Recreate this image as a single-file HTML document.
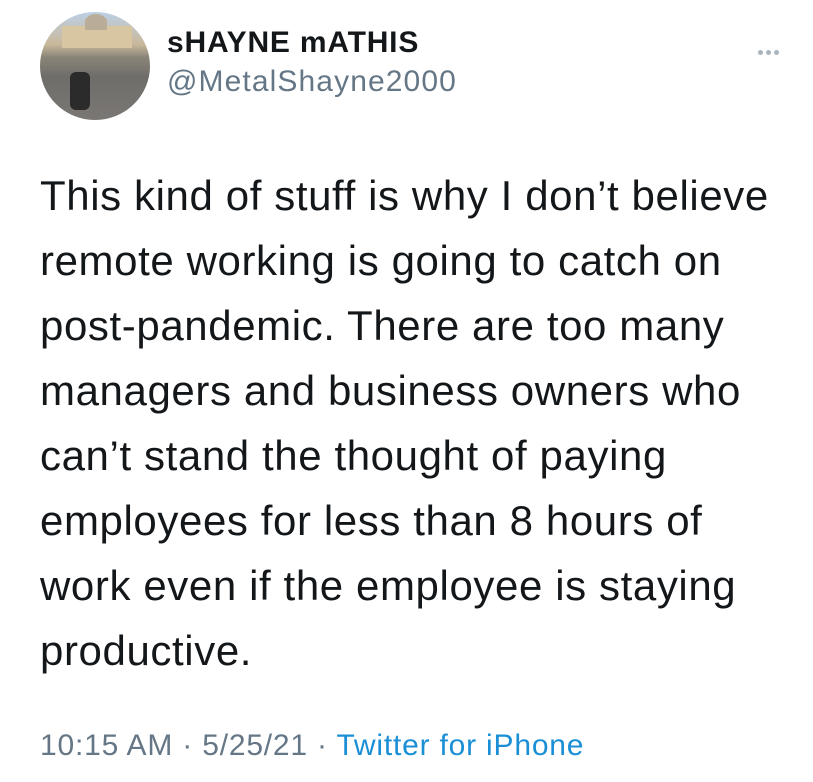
<!DOCTYPE html>
<html><head><style>
body{margin:0;width:813px;height:782px;background:#fff;font-family:"Liberation Sans",Arial,sans-serif;position:relative;overflow:hidden}
.av{position:absolute;left:40px;top:12px;width:110px;height:108px;border-radius:50%;overflow:hidden;background:linear-gradient(#bcd0e6 0%,#c9b89a 30%,#8a8478 42%,#6f6d6a 60%,#7a7774 100%)}
.name{position:absolute;left:167px;top:26px;font-size:30px;letter-spacing:0.8px;font-weight:bold;color:#14171a}
.handle{position:absolute;left:167px;top:65px;font-size:30px;letter-spacing:1.1px;color:#657786}
.dots{position:absolute;left:758px;top:42px}
.dots i{display:inline-block;width:5px;height:5px;border-radius:50%;background:#aab4bd;margin-right:3px}
.txt{position:absolute;left:40px;top:163px;font-size:42px;line-height:65px;color:#14171a;letter-spacing:0.6px}
.ft{position:absolute;left:40px;top:729px;font-size:30px;letter-spacing:0.8px;color:#657786}
.ft span{color:#1b8fd6}
</style></head><body>
<div class="av">
<div style="position:absolute;left:22px;top:14px;width:70px;height:22px;background:#d8c6a3"></div>
<div style="position:absolute;left:45px;top:2px;width:22px;height:16px;border-radius:50% 50% 0 0;background:#b9ad98"></div>
<div style="position:absolute;left:30px;top:60px;width:20px;height:38px;background:#2b2b2b;border-radius:6px"></div>
</div>
<div class="name">sHAYNE mATHIS</div>
<div class="handle">@MetalShayne2000</div>
<div class="dots"><i></i><i></i><i></i></div>
<div class="txt">This kind of stuff is why I don’t believe<br>remote working is going to catch on<br>post-pandemic. There are too many<br>managers and business owners who<br>can’t stand the thought of paying<br>employees for less than 8 hours of<br>work even if the employee is staying<br>productive.</div>
<div class="ft">10:15 AM · 5/25/21 · <span>Twitter for iPhone</span></div>
</body></html>
